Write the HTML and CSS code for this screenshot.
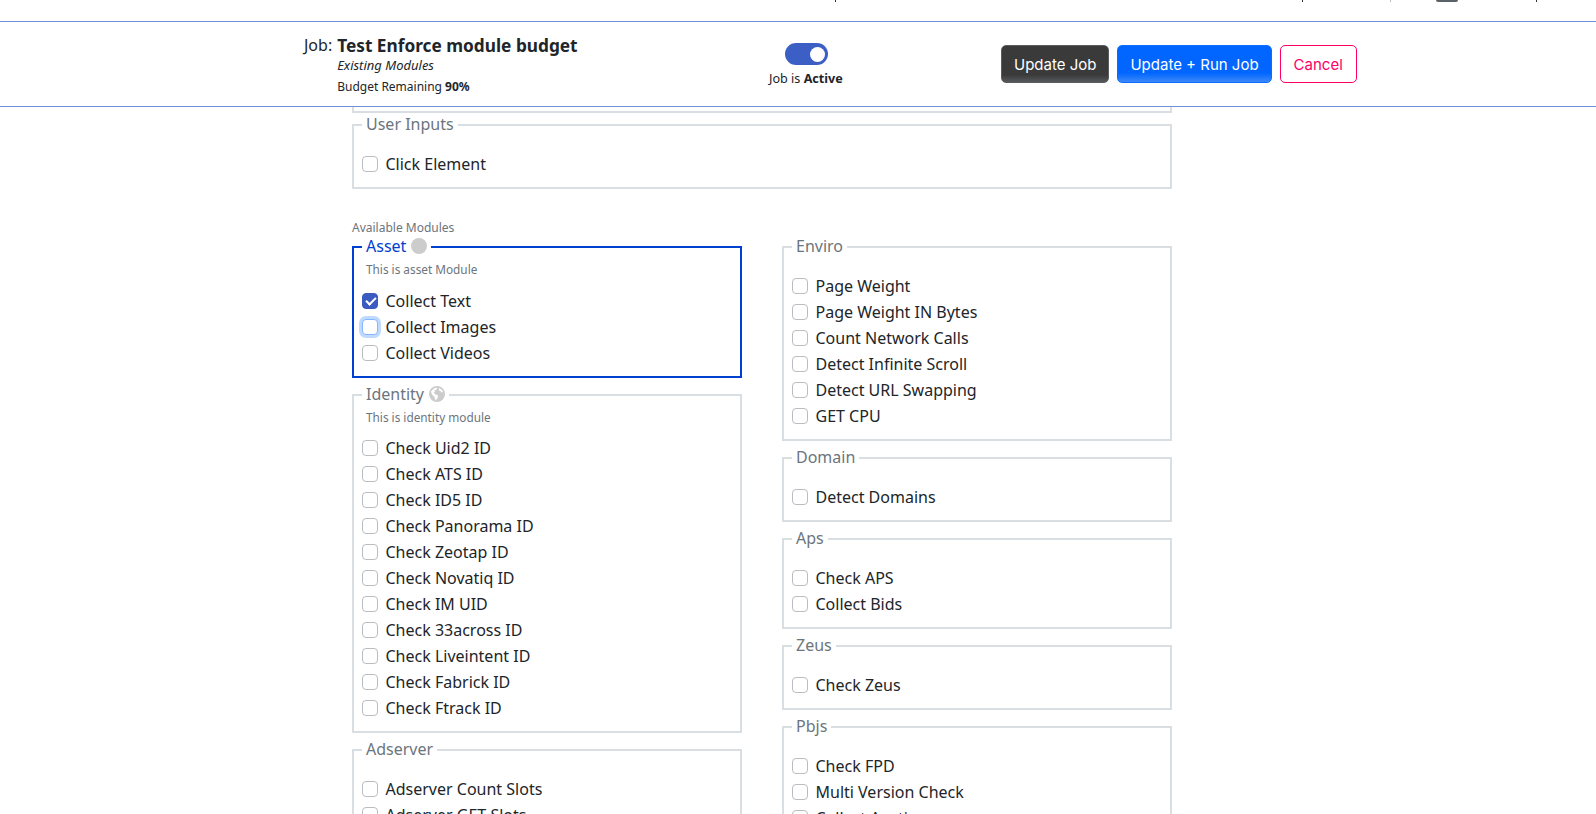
FILE: index.html
```html
<!DOCTYPE html>
<html lang="en">
<head>
<meta charset="utf-8">
<title>Edit Job</title>
<link rel="stylesheet" href="styles.css">
</head>
<body>
<div class="topbar">
  <span class="mark m1"></span><span class="mark m2"></span><span class="mark m3"></span><span class="pill"></span><span class="mark m4"></span>
</div>
<header class="jobbar">
  <div class="job">
    <span class="job-label">Job:</span>
    <div class="job-info">
      <div class="job-title">Test Enforce module budget</div>
      <div class="job-sub">Existing Modules</div>
      <div class="job-budget">Budget Remaining <b>90%</b></div>
    </div>
  </div>
  <div class="status">
    <span class="toggle"><span class="knob"></span></span>
    <span class="status-text">Job is <b>Active</b></span>
  </div>
  <div class="actions">
    <button class="btn btn-dark">Update Job</button>
    <button class="btn btn-blue">Update + Run Job</button>
    <button class="btn btn-cancel">Cancel</button>
  </div>
</header>
<main class="content">
  <div class="peek"></div>
  <fieldset class="group"><legend>User Inputs</legend><div class="spacer"></div>
    <label class="row"><input type="checkbox">Click Element</label>
  </fieldset>
  <div class="avail">Available Modules</div>
  <div class="columns">
    <div class="col">
      <fieldset class="group active"><legend>Asset <span class="dot"></span></legend>
        <div class="desc">This is asset Module</div>
        <label class="row"><input type="checkbox" checked>Collect Text</label>
        <label class="row"><input type="checkbox" class="focus">Collect Images</label>
        <label class="row"><input type="checkbox">Collect Videos</label>
      </fieldset>
      <fieldset class="group"><legend>Identity <svg class="globe" viewBox="0 0 16 16"><path fill="#ccc" d="M8 0a8 8 0 1 0 0 16A8 8 0 0 0 8 0zM2 5.500l2-2.300 3-1.700 1.500 1L7 3.800 5.500 4.500 6 6 4.500 6.500 6.500 8.500 8.500 9 9 11l-1.500 2.500-1 1L5.500 11 3 8.500zM10 2l3 2 1 2-1.500 .5-1-1.500L10 4.500z"/></svg></legend>
        <div class="desc">This is identity module</div>
        <label class="row"><input type="checkbox">Check Uid2 ID</label>
        <label class="row"><input type="checkbox">Check ATS ID</label>
        <label class="row"><input type="checkbox">Check ID5 ID</label>
        <label class="row"><input type="checkbox">Check Panorama ID</label>
        <label class="row"><input type="checkbox">Check Zeotap ID</label>
        <label class="row"><input type="checkbox">Check Novatiq ID</label>
        <label class="row"><input type="checkbox">Check IM UID</label>
        <label class="row"><input type="checkbox">Check 33across ID</label>
        <label class="row"><input type="checkbox">Check Liveintent ID</label>
        <label class="row"><input type="checkbox">Check Fabrick ID</label>
        <label class="row"><input type="checkbox">Check Ftrack ID</label>
      </fieldset>
      <fieldset class="group"><legend>Adserver</legend><div class="spacer"></div>
        <label class="row"><input type="checkbox">Adserver Count Slots</label>
        <label class="row"><input type="checkbox">Adserver GET Slots</label>
      </fieldset>
    </div>
    <div class="col">
      <fieldset class="group"><legend>Enviro</legend><div class="spacer"></div>
        <label class="row"><input type="checkbox">Page Weight</label>
        <label class="row"><input type="checkbox">Page Weight IN Bytes</label>
        <label class="row"><input type="checkbox">Count Network Calls</label>
        <label class="row"><input type="checkbox">Detect Infinite Scroll</label>
        <label class="row"><input type="checkbox">Detect URL Swapping</label>
        <label class="row"><input type="checkbox">GET CPU</label>
      </fieldset>
      <fieldset class="group"><legend>Domain</legend><div class="spacer"></div>
        <label class="row"><input type="checkbox">Detect Domains</label>
      </fieldset>
      <fieldset class="group"><legend>Aps</legend><div class="spacer"></div>
        <label class="row"><input type="checkbox">Check APS</label>
        <label class="row"><input type="checkbox">Collect Bids</label>
      </fieldset>
      <fieldset class="group"><legend>Zeus</legend><div class="spacer"></div>
        <label class="row"><input type="checkbox">Check Zeus</label>
      </fieldset>
      <fieldset class="group"><legend>Pbjs</legend><div class="spacer"></div>
        <label class="row"><input type="checkbox">Check FPD</label>
        <label class="row"><input type="checkbox">Multi Version Check</label>
        <label class="row"><input type="checkbox">Collect Auctions</label>
      </fieldset>
    </div>
  </div>
</main>
</body>
</html>
```
FILE: styles.css
```css
* { box-sizing: border-box; }
html, body { margin: 0; height: 814px; overflow: hidden; background: #fff; }
body { font-family: "Noto Sans", "Liberation Sans", sans-serif; font-size: 16px; color: #212529; }

.topbar { height: 21px; display: flex; align-items: flex-start; padding-left: 835px; }
.mark { width: 1px; height: 2px; background: #333; }
.m2 { margin-left: 466px; }
.m3 { margin-left: 87px; background: #b5bcc8; }
.pill { width: 22px; height: 2px; margin-left: 45px; background: #5a6268; border-radius: 0 0 8px 8px; }
.m4 { margin-left: 78px; }

.jobbar { height: 86px; border-top: 1px solid #6f8fd8; border-bottom: 1px solid #6f8fd8; display: flex; padding-left: 304px; position: relative; background: #fff; }
.job { width: 481px; display: flex; align-items: flex-start; padding-top: 11px; }
.job-label { margin-right: 5px; line-height: 24px; }
.job-title { font-size: 17.250px; font-weight: 700; line-height: 25px; }
.job-sub { font-size: 13px; font-style: italic; line-height: 16px; margin-top: -1px; }
.job-budget { font-size: 12px; line-height: 16px; margin-top: 6px; }
.status { width: 216px; display: flex; flex-direction: column; align-items: flex-start; padding: 21px 0 0 0; }
.toggle { width: 43px; height: 22px; border-radius: 11px; background: #3b5fc4; display: flex; justify-content: flex-end; align-items: center; padding-right: 3px; margin-bottom: 5px; }
.knob { width: 15px; height: 15px; border-radius: 50%; background: #fff; }
.status-text { font-size: 12.600px; line-height: 18px; margin-left: -16px; }
.actions { display: flex; gap: 8px; padding-top: 23px; height: 61px; }
.btn { height: 38px; padding: 0 12px; font: 15px "Inter", "Liberation Sans", sans-serif; border-radius: 5px; border: 1px solid; cursor: pointer; }
.btn-dark { color: #fff; border-color: #5a5d60; background: linear-gradient(#3a3a3a 80%, #55585a); }
.btn-blue { color: #fff; border-color: #0d6efd; background: linear-gradient(#0066ff 75%, #3d88f8); }
.btn-cancel { padding: 0 13px; color: #ff0066; border-color: #ff0066; background: #fff; }

.content { width: 820px; margin-left: 352px; }
.peek { height: 6px; border: 2px solid #d9dee3; border-top: 0; }
.group { margin: 0 0 5px; padding: 0 8px 10px; border: 2px solid #d9dee3; min-width: 0; }
.group legend { padding: 0 4px 2px; float: none; width: auto; height: 24px; line-height: 22px; color: #6c757d; display: flex; align-items: center; gap: 5px; }
.spacer { height: 14px; }
.desc { height: 28.500px; padding: 0 0 0 4px; font-size: 11.800px; line-height: 20px; color: #6c757d; }
.row { display: flex; align-items: center; height: 26px; gap: 7.500px; }
.row input { appearance: none; width: 16px; height: 16px; margin: 0; background: #fff; border: 1px solid #b9bdc2; border-radius: 4px; flex: none; }
.row input:checked { background: #3b5bc0; border-color: #3b5bc0; }
.row input:checked::after { content: ""; display: block; width: 8px; height: 4px; margin: 3px 0 0 3px; border-left: 2px solid #fff; border-bottom: 2px solid #fff; transform: rotate(-45deg); }
.row input.focus { border-color: #86b7fe; box-shadow: 0 0 0 3px #bfd9ff; }
.avail { font-size: 12px; line-height: 16px; color: #6c757d; margin-top: 31px; height: 15px; }
.columns { display: grid; grid-template-columns: 390px 390px; column-gap: 40px; align-items: start; }
.active { border-color: #0040d0; }
.group.active legend { color: #0040d0; }
.dot { width: 16px; height: 16px; border-radius: 50%; background: #ccc; }
.globe { width: 16px; height: 16px; }
```
